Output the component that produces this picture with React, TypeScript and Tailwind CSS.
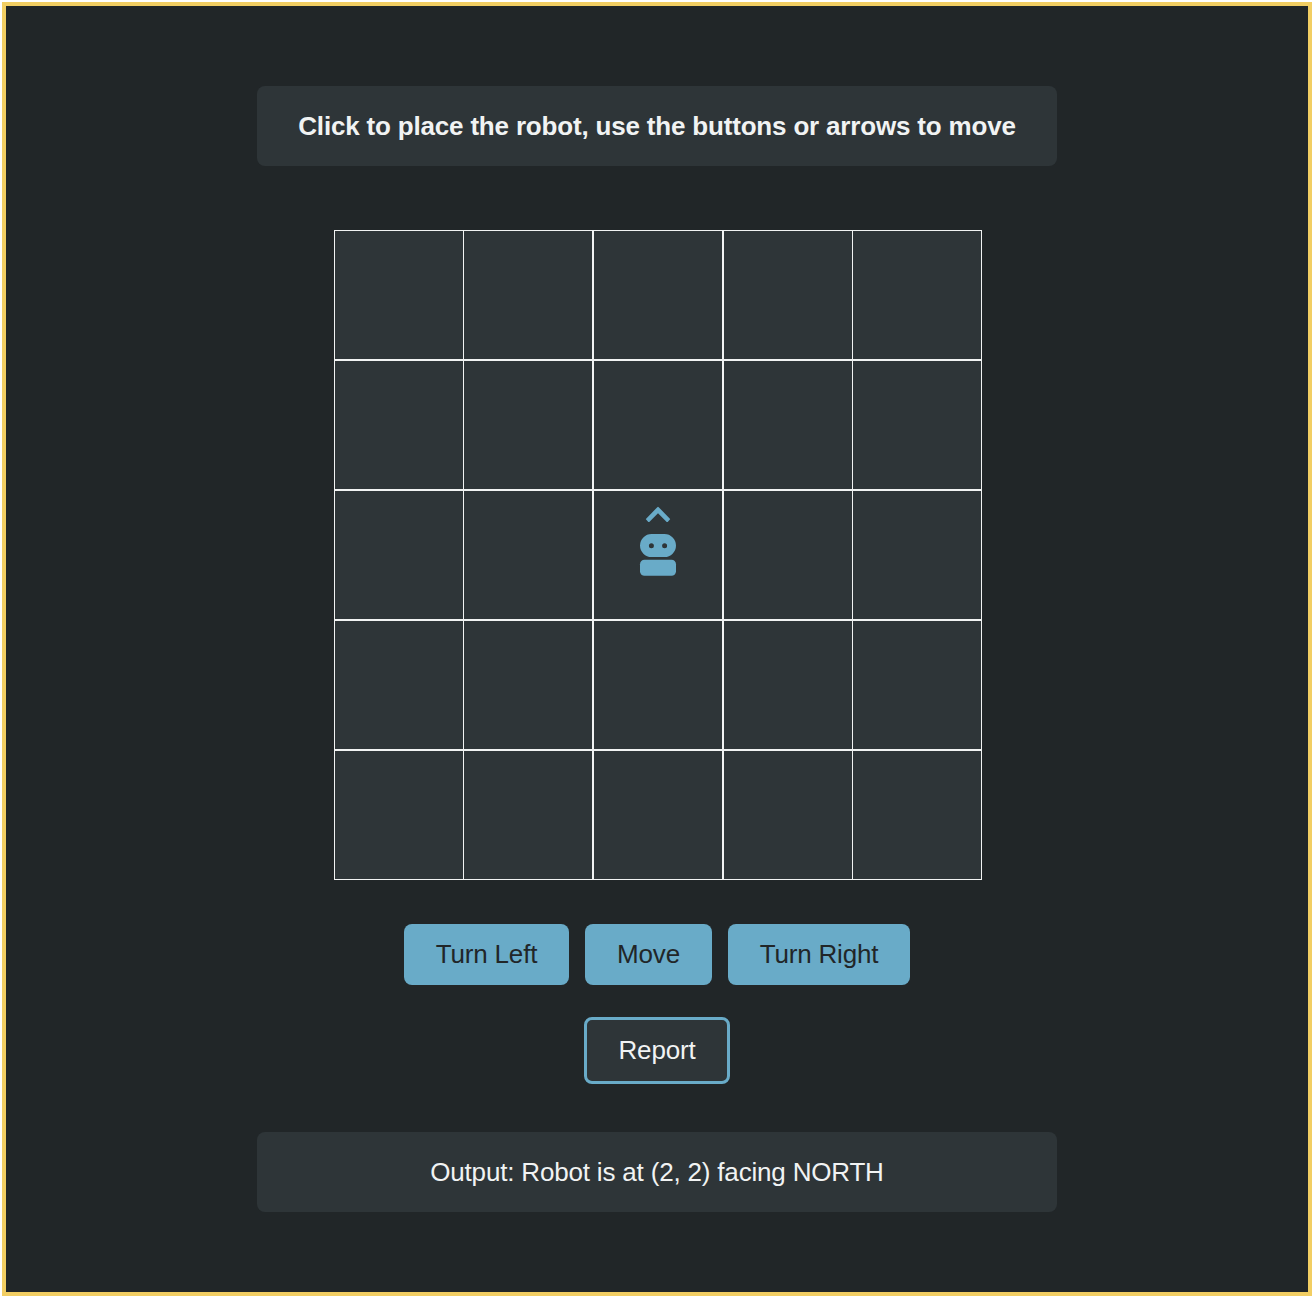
import { useState } from "react";

const SIZE = 5;
const DIRECTIONS = ["NORTH", "EAST", "SOUTH", "WEST"];
const STEPS = [
  [0, 1],
  [1, 0],
  [0, -1],
  [-1, 0],
];

function RobotIcon({ facing }: { facing: number }) {
  return (
    <svg
      width="80"
      height="112"
      viewBox="0 0 80 112"
      style={{ transform: `rotate(${facing * 90}deg)` }}
    >
      <path
        d="M39.3 9.2Q40 8.5 40.7 9.2L51.9 20.7Q52.3 21.1 51.9 21.6L49.7 23.9Q49.2 24.3 48.7 23.9L40 15.2 31.3 23.9Q30.8 24.3 30.3 23.9L28.1 21.6Q27.7 21.1 28.1 20.7Z"
        fill="#69abc8"
      />
      <path
        fill="#69abc8"
        fillRule="evenodd"
        d="M33.5 36.1h13a11.5 11.5 0 0 1 0 23h-13a11.5 11.5 0 0 1 0-23ZM33.4 45.2a2.5 2.5 0 1 0 0 5 2.5 2.5 0 0 0 0-5ZM46.6 45.2a2.5 2.5 0 1 0 0 5 2.5 2.5 0 0 0 0-5Z"
      />
      <rect x="22" y="61.7" width="36" height="16" rx="4.5" fill="#69abc8" />
    </svg>
  );
}

export default function App() {
  const [robot, setRobot] = useState({ x: 2, y: 2, facing: 0 });
  const [output, setOutput] = useState("Robot is at (2, 2) facing NORTH");

  const turn = (by: number) => setRobot((r) => ({ ...r, facing: (r.facing + by + 4) % 4 }));
  const move = () =>
    setRobot((r) => {
      const x = r.x + STEPS[r.facing][0];
      const y = r.y + STEPS[r.facing][1];
      return x < 0 || y < 0 || x >= SIZE || y >= SIZE ? r : { ...r, x, y };
    });
  const report = () =>
    setOutput(`Robot is at (${robot.x}, ${robot.y}) facing ${DIRECTIONS[robot.facing]}`);

  return (
    <div className="h-[1298px] w-[1316px] bg-white py-0.5 pr-1 pl-0.5 font-['Liberation_Sans',Arial,sans-serif] text-[26px] leading-[30px] tracking-[-0.18px] text-[#f1f3f3]">
      <main className="flex h-full flex-col items-center border-4 border-[#f2ce63] bg-[#212628] pt-20">
        <h1 className="flex h-20 w-[800px] items-center justify-center rounded-lg bg-[#2e3538] font-bold whitespace-nowrap">
          Click to place the robot, use the buttons or arrows to move
        </h1>

        <div className="mt-16 ml-0.5 grid grid-cols-[130px_129px_130px_130px_129px] grid-rows-[repeat(5,130px)]">
          {Array.from({ length: SIZE * SIZE }, (_, i) => {
            const x = i % SIZE;
            const y = SIZE - 1 - Math.floor(i / SIZE);
            const border = x === 1 || x === 4 ? "border border-l-0" : "border";
            return (
              <div
                key={i}
                onClick={() => setRobot((r) => ({ ...r, x, y }))}
                className={`${border} flex items-start justify-center border-[#f1f3f3] bg-[#2e3538] pt-[7px]`}
              >
                {robot.x === x && robot.y === y && <RobotIcon facing={robot.facing} />}
              </div>
            );
          })}
        </div>

        <div className="mt-11 flex gap-4 text-[#212628]">
          <button onClick={() => turn(-1)} className="h-[61px] w-[165px] rounded-lg bg-[#69abc8] pb-0.5">
            Turn Left
          </button>
          <button onClick={move} className="h-[61px] w-[127px] rounded-lg bg-[#69abc8] pb-0.5">
            Move
          </button>
          <button onClick={() => turn(1)} className="h-[61px] w-[182px] rounded-lg bg-[#69abc8] pb-0.5">
            Turn Right
          </button>
        </div>

        <button
          onClick={report}
          className="mt-8 h-[67px] w-[146px] rounded-lg border-3 border-[#69abc8] bg-[#2e3538] pb-0.5"
        >
          Report
        </button>

        <p className="mt-12 flex h-20 w-[800px] items-center justify-center rounded-lg bg-[#2e3538]">
          Output: {output}
        </p>
      </main>
    </div>
  );
}
